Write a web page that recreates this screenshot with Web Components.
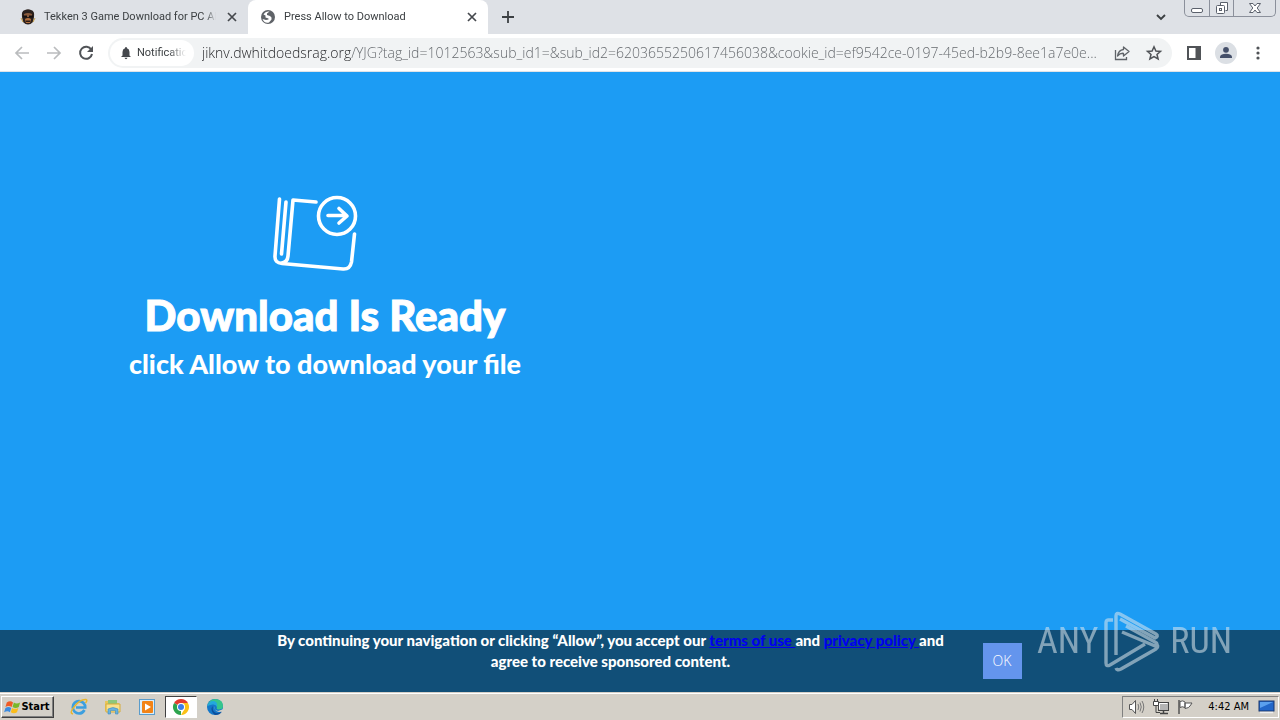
<!DOCTYPE html>
<html lang="en">
<head>
<meta charset="utf-8">
<title>Press Allow to Download</title>
<style>
body{margin:0;min-height:100vh;display:flex;flex-direction:column;font:11px/16px Roboto,"Liberation Sans",sans-serif;color:#3c4043;background:#1c9cf4}
download-page{flex:1}
</style>
</head>
<body>
<tab-strip>
  <browser-tab><app-icon slot="icon" name="face"></app-icon>Tekken 3 Game Download for PC All Versions</browser-tab>
  <browser-tab active><app-icon slot="icon" name="globe"></app-icon>Press Allow to Download</browser-tab>
</tab-strip>
<tool-bar></tool-bar>
<download-page>
  <span slot="title">Download Is Ready</span>
  <span slot="hint">click Allow to download your file</span>
</download-page>
<consent-bar></consent-bar>
<task-bar></task-bar>
<script>
const define = (name, html, setup) => {
  const template = document.createElement('template');
  template.innerHTML = html;
  customElements.define(name, class extends HTMLElement {
    constructor() {
      super();
      this.attachShadow({mode: 'open'}).append(template.content.cloneNode(true));
    }
    connectedCallback() { if (setup) setup(this, this.shadowRoot); }
  });
};

const icons = {
  face: [16, '<path d="M2 8Q1 2 5 1Q8-.5 11 1Q15 2 14 8L13 13Q8 18 3 13Z" fill="#2b211d"/><path d="M4 5Q8 3 12 5L12 8H4Z" fill="#8a5a3b"/><path d="M3 6.500H7V8.500H3ZM9 6.500H13V8.500H9Z" fill="#17110f"/><path d="M5 10Q8 8 11 10L10 14H6Z" fill="#b5713f"/><path d="M6 11.500H10V13H6Z" fill="#2a1a14"/><path d="M1 9Q2 11 3 13M15 9L13 13" stroke="#c8a24a" fill="none"/>'],
  globe: [16, '<circle cx="8" cy="8" r="7" fill="#5f6368"/><path d="M9.500 2.500L7 4.500V6L10 7L11.500 8.500V10.500L9 13.500Q4 14.500 2.500 10L6 11L8.500 10.500V9.500L5.500 8.500V6.500L3.500 5.500Q5.500 2 9.500 2.500Z" fill="#fff"/>'],
  close: [16, '<path d="M4 4L12 12M12 4L4 12" stroke="#45484d" stroke-width="1.700"/>'],
  plus: [16, '<path d="M8 2V14M2 8H14" stroke="#3c4043" stroke-width="1.800"/>'],
  chevron: [16, '<path d="M4 6L8 10L12 6" fill="none" stroke="#3c4043" stroke-width="1.900"/>'],
  min: [16, '<rect x="2.500" y="8.500" width="11" height="4" rx="1.500" fill="#fff" stroke="#5b616c"/>'],
  restore: [16, '<path d="M6.500 5V2.500H13.500V10.500H11.500" fill="#fff" stroke="#5b616c"/><rect x="2.500" y="5.500" width="8" height="8" rx="1" fill="#fff" stroke="#5b616c"/><rect x="5.500" y="8.500" width="2" height="2" fill="none" stroke="#5b616c"/>'],
  exit: [16, '<path d="M2.500 3.500H6L8 6L10 3.500H13.500L10.200 8L13.500 12.500H10L8 10L6 12.500H2.500L5.800 8Z" fill="#fff" stroke="#5b616c"/>'],
  back: [18, '<path d="M16 9H3M9 3L3 9L9 15" fill="none" stroke="#babcbe" stroke-width="1.700"/>'],
  forward: [18, '<path d="M2 9H15M9 3L15 9L9 15" fill="none" stroke="#babcbe" stroke-width="1.700"/>'],
  reload: [18, '<path d="M14.300 5.800A6 6 0 1 0 15 10" fill="none" stroke="#505357" stroke-width="2"/><path d="M16 2V8H10Z" fill="#505357"/>'],
  bell: [16, '<path d="M8 2Q9 2 9 3.200Q11.500 4 11.500 7V10.500L13 12H3L4.500 10.500V7Q4.500 4 7 3.200Q7 2 8 2ZM6.500 12.800H9.500Q9 14.200 8 14.200Q7 14.200 6.500 12.800Z" fill="#45484d"/>'],
  share: [18, '<path d="M2.500 6V15.500H13.500V13" fill="none" stroke="#5f6368" stroke-width="1.300"/><path d="M10.500 3L16 7.500L10.500 12V9.300Q7 9 4.500 12Q5.500 6 10.500 5.500Z" fill="none" stroke="#5f6368" stroke-width="1.300" stroke-linejoin="round"/>'],
  star: [18, '<path d="M9 2.800L10.900 7L15.500 7.400L12 10.500L13.100 15L9 12.600L4.900 15L6 10.500L2.500 7.400L7.100 7Z" fill="none" stroke="#505357" stroke-width="1.500"/>'],
  panel: [18, '<rect x="3" y="3" width="12" height="12" fill="none" stroke="#505357" stroke-width="2"/><path d="M10.500 3H16V15H10.500Z" fill="#505357"/>'],
  person: [22, '<circle cx="11" cy="11" r="11" fill="#dbdfe4"/><circle cx="11" cy="7.800" r="2.900" fill="#45506a"/><path d="M5 16V14.500Q6 11.800 11 11.800Q16 11.800 17 14.500V16Z" fill="#45506a"/>'],
  dots: [18, '<g fill="#505357"><circle cx="9" cy="4" r="1.600"/><circle cx="9" cy="9" r="1.600"/><circle cx="9" cy="14" r="1.600"/></g>'],
  book: [84, '<g fill="none" stroke="#fff" stroke-width="3.600" stroke-linecap="round" stroke-linejoin="round"><path d="M6.500 7L2 64Q1.500 71 9 71.500L70 77Q77 77.500 78.500 70L81.500 42"/><path d="M13 10L8.500 62"/><path d="M43 10L20 8L15 64Q14.500 70 9 71"/><circle cx="64" cy="24" r="18.500"/><path d="M55 23.500H73M66 16.500L74 24L66 31"/></g>'],
  flag: [18, '<path d="M2 4Q6 1 9 4L7.500 9Q4 7 .5 9Z" fill="#ef5b25"/><path d="M10 4Q13 6 17 4L15.500 9Q12 11 8.500 9Z" fill="#79b829"/><path d="M.5 10Q4 8 7 10L5.500 15Q3 12.500-1 15Z" fill="#3b8be0"/><path d="M8 10Q11 12 15 10L13.500 15Q10 17 6.500 15Z" fill="#fbbd1b"/>'],
  ie: [18, '<path d="M14.500 12Q12.500 15.500 9 15.500A6.200 6.200 0 1 1 15.200 9.500H6" fill="none" stroke="#3c9fdf" stroke-width="2.700"/><path d="M3 16Q-1 15 4 9Q10 1 16 1.500Q18 2 15.500 5" fill="none" stroke="#e8b62c" stroke-width="1.400"/>'],
  folder: [18, '<path d="M1 3H7L8 5H15V13H1Z" fill="#e8c55a"/><path d="M4 2H13V8H4Z" fill="#8dc77b"/><path d="M2 6H16V14H2Z" fill="#f8e08d" stroke="#d6ab3b"/><path d="M4 16V11Q9 8 14 11V16H11.500V12.500H6.500V16Z" fill="#69b2df" stroke="#3c8bbd" stroke-width=".6"/>'],
  media: [18, '<rect x="1.500" y="1.500" width="15" height="15" fill="#d9edfa" stroke="#5a9ccb"/><rect x="4" y="3" width="11" height="12" rx="1" fill="#f28316"/><path d="M7 5.500L13 9L7 12.500Z" fill="#fff"/>'],
  chrome: [18, '<circle cx="9" cy="9" r="8" fill="#fff"/><path d="M9 9L2.070 5A8 8 0 0 1 15.930 5Z" fill="#e33b2e"/><path d="M9 9L2.070 5A8 8 0 0 0 9 17Z" fill="#2da44e"/><path d="M9 5H15.930A8 8 0 0 1 9 17L12.500 11Z" fill="#fbc116"/><circle cx="9" cy="9" r="4" fill="#fff"/><circle cx="9" cy="9" r="3" fill="#3b7de9"/>'],
  edge: [18, '<circle cx="9" cy="9" r="8" fill="#1477c9"/><path d="M1.500 8Q3 1 9.500 1Q17 1.500 17 8Q17 12 12 11.500Q10 11 11 9Q10.500 5.500 6.500 5.500Q3 5.500 1.500 8Z" fill="#36c58c"/><path d="M1.500 8Q3 2.500 8 3Q12 4 11 9Q10 6 6.500 6.500Q3 7 1.500 8Z" fill="#23a8dc"/><path d="M7 8Q5.500 13 10 15Q13 15.500 16 13.500Q14 17 9 17Q5 14 5.500 10Z" fill="#0d4f9c"/><path d="M8.500 8Q7.500 12 12 13L17.500 11L17 13.500L13 14Q8 13 8.500 8Z" fill="#d4d0c8"/>'],
  sound: [18, '<path d="M1.500 6.500H4L7.500 2.500V15.500L4 11.500H1.500Z" fill="#fff" stroke="#555"/><path d="M10 6Q11.500 9 10 12M12 4.500Q14.500 9 12 13.500M14 3Q17.500 9 14 15" fill="none" stroke="#777"/>'],
  network: [18, '<rect x="6.500" y="4.500" width="10" height="8" fill="#b4b4b4" stroke="#444"/><path d="M7.500 11.500V5.500H15.500" fill="none" stroke="#fff"/><path d="M11.500 13V15M8 15.500H16" stroke="#444" stroke-width="1.500"/><path d="M2.500 1V4M5.500 1V4" stroke="#444"/><path d="M1.500 3.500H6.500V7.500H1.500Z" fill="#fff" stroke="#444"/><path d="M4 8V14.500H8" fill="none" stroke="#444"/>'],
  pennant: [18, '<path d="M3 2V16" stroke="#555" stroke-width="1.500"/><path d="M4 3.500Q7 2 9 4V9.500Q6 8 4 9.500ZM9 5L16 5L14 8Q13 10 9 10.500Z" fill="#fff" stroke="#555"/>'],
  desktop: [18, '<rect x="1" y="3" width="15" height="10" fill="#2367c9" stroke="#18376e"/><path d="M2 4H15L2 10Z" fill="#5ba0ee"/><path d="M2 14.500H15" stroke="#eee" stroke-width="1.500"/>'],
  play: [60, '<g fill="none" stroke-width="3.400" stroke-linejoin="round"><path d="M9 9H4Q2 9 2 12V52Q2 56 6 54L41 33M12 44V5Q12 1 16 3L52 23Q55 25 51 27L16 8"/><path d="M18 21L51 35Q55 33 51 31L22 15M12 57Q13 60 17 58L52 38Q56 35 51 32"/></g>']
};
define('app-icon', '<style>:host{display:block;flex:none}svg{display:block;overflow:visible}</style><svg aria-hidden="true"></svg>', (host, root) => {
  const [size, shape] = icons[host.getAttribute('name')];
  const svg = root.querySelector('svg');
  svg.setAttribute('viewBox', `0 0 ${size} ${size}`);
  svg.setAttribute('width', host.getAttribute('size') || size);
  svg.setAttribute('height', host.getAttribute('size') || size);
  svg.innerHTML = shape;
});

const buttonReset = 'button{all:unset;box-sizing:border-box;display:flex;align-items:center;justify-content:center;cursor:pointer;flex:none}';

define('browser-tab', `<style>${buttonReset}
:host{display:flex;align-items:center;box-sizing:border-box;width:240px;min-width:0;height:34px;padding:0 8px 0 12px;gap:8px;border-radius:8px 8px 0 0;color:#3c4043}
:host([active]){background:#fff}
.title{flex:1;min-width:0;overflow:hidden;white-space:nowrap;-webkit-mask-image:linear-gradient(90deg,#000 94%,transparent)}
</style><slot name="icon"></slot><span class="title"><slot></slot></span><button aria-label="Close tab"><app-icon name="close"></app-icon></button>`);

define('tab-strip', `<style>${buttonReset}
:host{display:flex;height:34px;background:#dee1e6;padding:0 4px 0 8px}
.add{width:28px;height:34px;margin-left:6px}
.spacer{flex:1}
.list{width:32px;height:34px;margin-right:7px}
.controls{display:flex;height:16px;border:1px solid #8b909b;border-top:0;border-radius:0 0 5px 5px;overflow:hidden}
.controls button{width:24px}
.controls button+button{border-left:1px solid #8b909b}
.controls .exit{width:42px}
</style><slot></slot><button class="add" aria-label="New tab"><app-icon name="plus"></app-icon></button><span class="spacer"></span>
<button class="list" aria-label="Search tabs"><app-icon name="chevron"></app-icon></button>
<div class="controls"><button aria-label="Minimize"><app-icon name="min"></app-icon></button><button aria-label="Restore"><app-icon name="restore"></app-icon></button><button class="exit" aria-label="Close"><app-icon name="exit"></app-icon></button></div>`);

define('tool-bar', `<style>${buttonReset}
:host{display:flex;align-items:center;height:37px;background:#fff;border-bottom:1px solid #dfe3e8;padding:0 6px}
button{width:32px;height:32px}
.omnibox{display:flex;align-items:center;flex:1;min-width:0;height:30px;background:#f1f3f4;border-radius:15px;margin:0 6px;padding:0 2px}
.chip{width:84px;height:26px;justify-content:flex-start;gap:3px;padding:0 8px;background:#fff;border-radius:13px}
.chip span{flex:1;min-width:0;overflow:hidden;white-space:nowrap;-webkit-mask-image:linear-gradient(90deg,#000 65%,transparent)}
input{flex:1;min-width:0;height:26px;border:0;padding:0;margin:0 0 0 8px;outline:0;font:300 14px/26px "Open Sans","Noto Sans",sans-serif;text-overflow:ellipsis;color:transparent;background:linear-gradient(90deg,#202124 149px,#5f6368 149px);-webkit-background-clip:text;background-clip:text}
</style>
<button aria-label="Back"><app-icon name="back"></app-icon></button><button aria-label="Forward"><app-icon name="forward"></app-icon></button><button aria-label="Reload"><app-icon name="reload"></app-icon></button>
<div class="omnibox"><button class="chip"><app-icon name="bell"></app-icon><span>Notifications</span></button>
<input type="text" aria-label="Address" spellcheck="false" value="jiknv.dwhitdoedsrag.org/YJG?tag_id=1012563&amp;sub_id1=&amp;sub_id2=6203655250617456038&amp;cookie_id=ef9542ce-0197-45ed-b2b9-8ee1a7e0e...">
<button aria-label="Share"><app-icon name="share"></app-icon></button><button aria-label="Bookmark"><app-icon name="star"></app-icon></button></div>
<button aria-label="Side panel"><app-icon name="panel"></app-icon></button><button aria-label="Profile"><app-icon name="person"></app-icon></button><button aria-label="Menu"><app-icon name="dots"></app-icon></button>`);

define('download-page', `<style>
:host{display:block;background:#1c9cf4;color:#fff}
.column{display:flex;flex-direction:column;align-items:center;width:50%;box-sizing:content-box;padding:120px 0 40px 5px;text-align:center}
app-icon{margin-right:20px}
h1{margin:15px 0 9px;font:900 42px/48px Lato,sans-serif;-webkit-text-stroke:1px #fff}
h2{margin:0;font:900 27px/32px Lato,sans-serif}
</style><div class="column"><app-icon name="book"></app-icon><h1><slot name="title"></slot></h1><h2><slot name="hint"></slot></h2></div>`);

define('consent-bar', `<style>
:host{display:flex;position:relative;justify-content:center;align-items:flex-start;gap:20px;min-height:62px;background:#114f78;color:#fff}
p{margin:0;max-width:704px;font:900 15px/21px Lato,sans-serif;text-align:center}
a{color:#0000ee}
button{margin:13px 0 0;border:0;width:39px;height:36px;padding:0;background:#6495ed;color:#fff;font:300 14px/20px "Open Sans",sans-serif}
brand-mark{position:absolute;right:48px;bottom:21px}
</style><p>By continuing your navigation or clicking “Allow”, you accept our <a href="#terms">terms of use </a>and <a href="#privacy">privacy policy </a><span>and</span> <span>agree to receive sponsored content.</span></p><button>OK</button><brand-mark></brand-mark>`);

define('brand-mark', `<style>
:host{display:flex;align-items:center;gap:6px;opacity:.55;color:#dfe8ee;font:400 36px/60px "Roboto Condensed","Liberation Sans Narrow",Roboto,sans-serif}
app-icon{stroke:#dfe8ee}
</style><span>ANY</span><app-icon name="play"></app-icon><span>RUN</span>`);

define('task-bar', `<style>${buttonReset}
:host{display:flex;align-items:center;height:26px;border-top:1px solid #fff;box-shadow:0 -1px #d4d0c8;margin-top:1px;background:#d4d0c8;padding:0 1px;color:#000}
.start{width:53px;height:22px;border:1px solid;border-color:#fff #404040 #404040 #fff;box-shadow:inset -1px -1px #808080;font:700 11px/16px "DejaVu Sans Condensed",sans-serif}
nav{display:flex;gap:2px;margin-left:9px}
nav button{width:32px;height:22px}
nav .active{background:#fff;border:1px solid;border-color:#404040 #fff #fff #404040}
.tray{display:flex;align-items:center;gap:6px;height:20px;margin-left:auto;padding:0 2px 0 5px;border:1px solid;border-color:#808080 #fff #fff #808080;font:11px/16px "DejaVu Sans Condensed",sans-serif}
time{margin:0 3px 0 8px}
</style><button class="start"><app-icon name="flag" size="16"></app-icon>Start</button>
<nav><button aria-label="Internet Explorer"><app-icon name="ie"></app-icon></button><button aria-label="Explorer"><app-icon name="folder"></app-icon></button><button aria-label="Media Player"><app-icon name="media"></app-icon></button><button class="active" aria-label="Chrome"><app-icon name="chrome"></app-icon></button><button aria-label="Edge"><app-icon name="edge"></app-icon></button></nav>
<div class="tray"><app-icon name="sound"></app-icon><app-icon name="network"></app-icon><app-icon name="pennant"></app-icon><time>4:42 AM</time><app-icon name="desktop"></app-icon></div>`);
</script>
</body>
</html>
